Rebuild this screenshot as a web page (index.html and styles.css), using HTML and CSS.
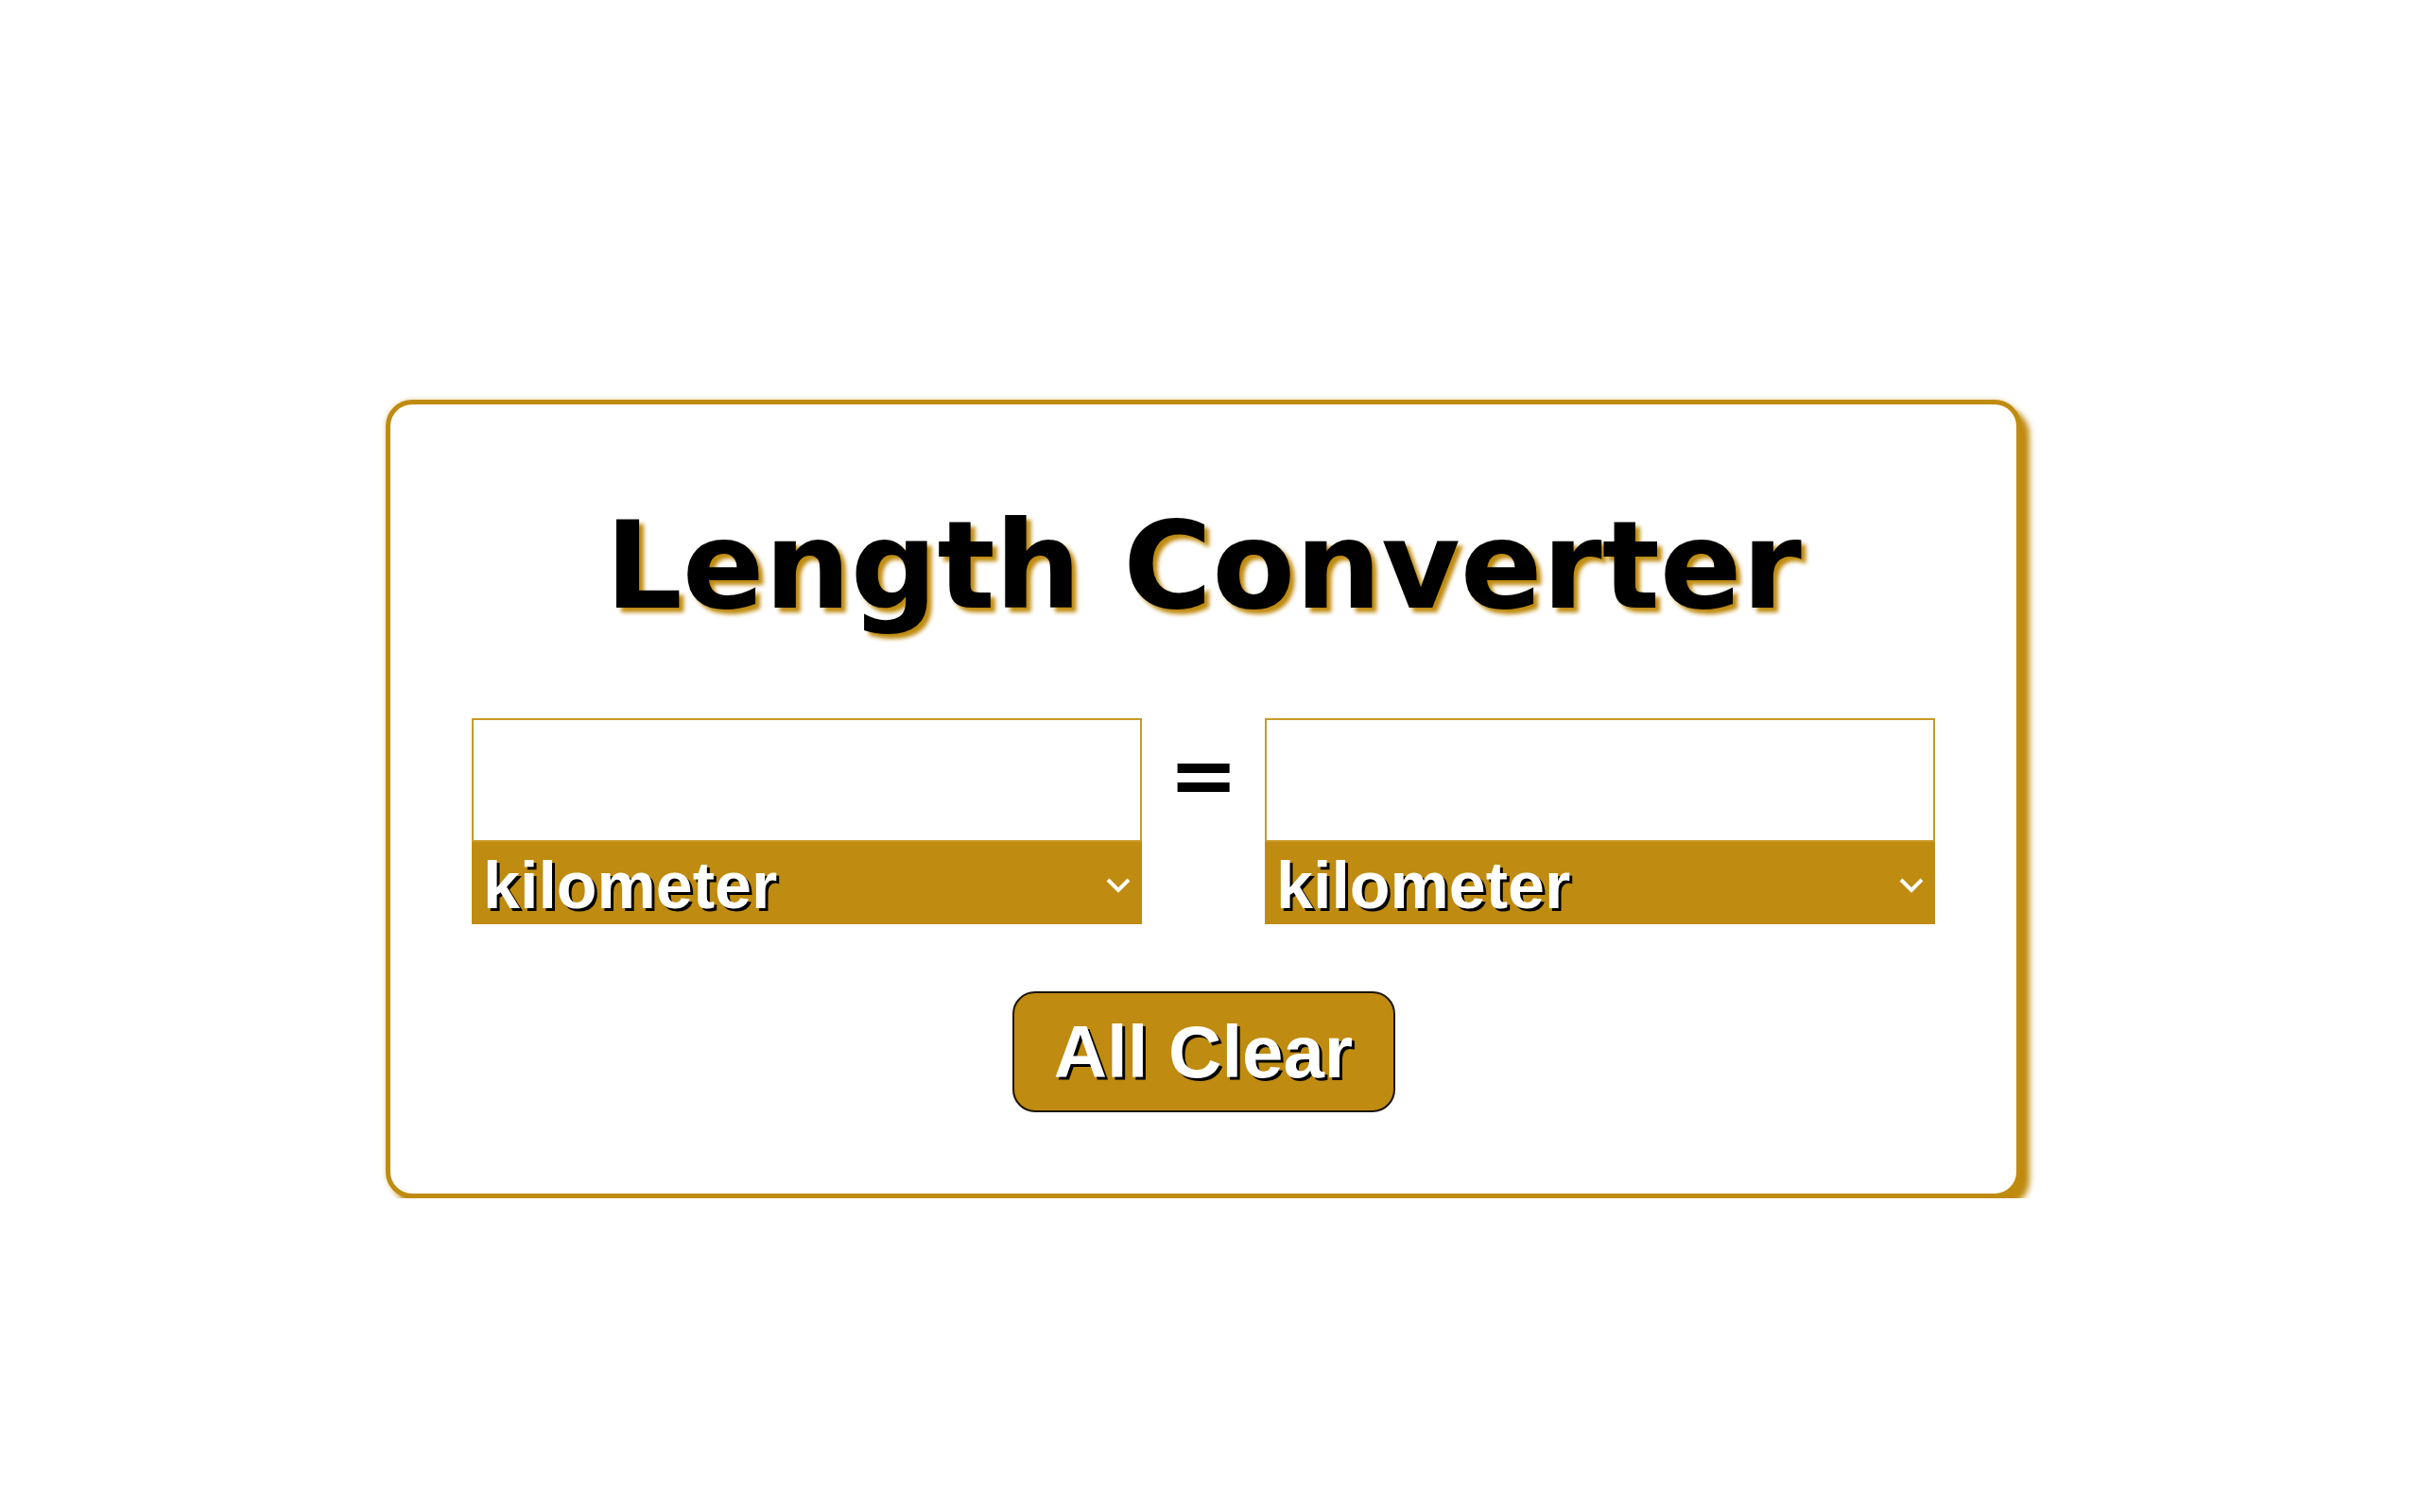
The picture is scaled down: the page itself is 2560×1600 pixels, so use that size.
FILE: index.html
```html
<!DOCTYPE html>
<html lang="en">
<head>
<meta charset="utf-8">
<title>Length Converter</title>
<link rel="stylesheet" href="styles.css">
</head>
<body>
<main class="card">
  <h1 class="title">Length Converter</h1>
  <div class="row">
    <div class="group">
      <input class="value" type="text" aria-label="from value">
      <div class="select-wrap">
        <select class="unit" aria-label="from unit">
          <option>kilometer</option>
          <option>meter</option>
          <option>centimeter</option>
          <option>millimeter</option>
          <option>mile</option>
          <option>yard</option>
          <option>foot</option>
          <option>inch</option>
        </select>
        <svg class="chev" viewBox="0 0 26 16" width="26" height="16" aria-hidden="true"><path d="M2 2 L13 13 L24 2" fill="none" stroke="#fff" stroke-width="4"/></svg>
      </div>
    </div>
    <div class="equals">=</div>
    <div class="group">
      <input class="value" type="text" aria-label="to value">
      <div class="select-wrap">
        <select class="unit" aria-label="to unit">
          <option>kilometer</option>
          <option>meter</option>
          <option>centimeter</option>
          <option>millimeter</option>
          <option>mile</option>
          <option>yard</option>
          <option>foot</option>
          <option>inch</option>
        </select>
        <svg class="chev" viewBox="0 0 26 16" width="26" height="16" aria-hidden="true"><path d="M2 2 L13 13 L24 2" fill="none" stroke="#fff" stroke-width="4"/></svg>
      </div>
    </div>
  </div>
  <div class="actions">
    <button class="clear" type="button">All Clear</button>
  </div>
</main>
</body>
</html>
```
FILE: styles.css
```css
html, body {
  margin: 0;
  padding: 0;
  background: #ffffff;
}

body {
  font-family: "DejaVu Sans", sans-serif;
}

.card {
  box-sizing: border-box;
  width: 1730px;
  margin: 423px 0 0 408px;
  padding: 0 86px 86px 86px;
  border: 5px solid #bf8b10;
  border-radius: 28px;
  box-shadow: 0 0 5px rgba(191, 139, 16, 0.45), 9px 9px 6px #bf8b10;
  background: #ffffff;
}

.title {
  margin: 96px 0 87px 0;
  font-family: "DejaVu Sans", sans-serif;
  font-weight: bold;
  font-size: 128px;
  line-height: normal;
  text-align: center;
  color: #000000;
  text-shadow: 5px 5px 4px #bf8b10;
}

.row {
  display: flex;
  align-items: flex-start;
}

.group {
  flex: 1;
  display: flex;
  flex-direction: column;
}

.value {
  box-sizing: border-box;
  display: block;
  width: 100%;
  height: 131px;
  margin: 0;
  padding: 0 12px;
  border: 2px solid #c99a28;
  border-radius: 0;
  font-family: "Liberation Sans", sans-serif;
  font-size: 60px;
  background: #ffffff;
  outline: none;
}

.select-wrap {
  position: relative;
}

.unit {
  -webkit-appearance: none;
  appearance: none;
  box-sizing: border-box;
  display: block;
  width: 100%;
  height: 87px;
  margin: 0;
  padding: 4px 50px 0 12px;
  border: none;
  border-radius: 0;
  background: #bf8b10;
  color: #ffffff;
  font-family: "Liberation Sans", sans-serif;
  font-weight: bold;
  font-size: 70px;
  line-height: normal;
  text-shadow: 3px 3px 0 #000000;
  outline: none;
}

.chev {
  position: absolute;
  right: 12px;
  top: 38px;
  pointer-events: none;
}

.equals {
  width: 130px;
  flex: none;
  margin-top: 9px;
  text-align: center;
  font-family: "DejaVu Sans", sans-serif;
  font-weight: bold;
  font-size: 88px;
  line-height: normal;
  color: #000000;
}

.actions {
  display: flex;
  justify-content: center;
  margin-top: 71px;
}

.clear {
  box-sizing: border-box;
  width: 405px;
  height: 128px;
  margin: 0;
  padding: 0;
  border: 2px solid #1a1406;
  border-radius: 24px;
  background: #bf8b10;
  color: #ffffff;
  font-family: "Liberation Sans", sans-serif;
  font-weight: bold;
  font-size: 78px;
  text-shadow: 3px 3px 0 #000000;
  cursor: pointer;
}
```
